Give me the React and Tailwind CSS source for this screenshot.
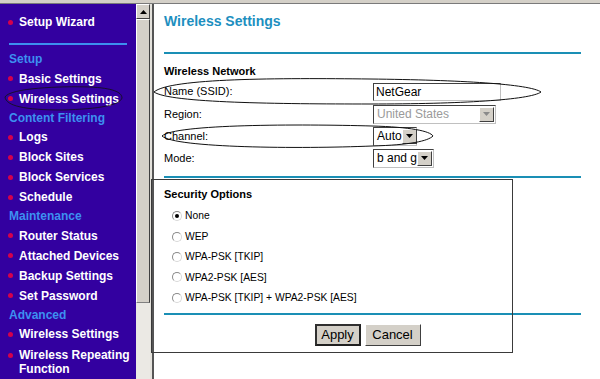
import React from "react";

const navItems = [
  { type: "head", label: "Setup" },
  { type: "item", label: "Basic Settings" },
  { type: "item", label: "Wireless Settings" },
  { type: "head", label: "Content Filtering" },
  { type: "item", label: "Logs" },
  { type: "item", label: "Block Sites" },
  { type: "item", label: "Block Services" },
  { type: "item", label: "Schedule" },
  { type: "head", label: "Maintenance" },
  { type: "item", label: "Router Status" },
  { type: "item", label: "Attached Devices" },
  { type: "item", label: "Backup Settings" },
  { type: "item", label: "Set Password" },
  { type: "head", label: "Advanced" },
  { type: "item", label: "Wireless Settings" },
];

const securityOptions = [
  "None",
  "WEP",
  "WPA-PSK [TKIP]",
  "WPA2-PSK [AES]",
  "WPA-PSK [TKIP] + WPA2-PSK [AES]",
];

const Bullet = () => (
  <div className="w-[5px] h-[5px] rounded-full bg-[#d4004c] shrink-0" />
);

const ArrowBtn = ({ disabled }) => (
  <span className="w-[15px] h-[15px] bg-[#d4d0c8] border border-t-white border-l-white border-r-[#404040] border-b-[#404040] flex items-center justify-center shrink-0">
    <svg width="7" height="4" viewBox="0 0 7 4">
      <path d="M0 0h7L3.5 4z" fill={disabled ? "#8a8a8a" : "#000"} />
    </svg>
  </span>
);

const Select = ({ value, width, disabled }) => (
  <div
    className={`h-[19px] flex items-center justify-between bg-white border border-t-[#404040] border-l-[#404040] border-r-[#c0c0c0] border-b-[#c0c0c0] pl-[3px] pr-[1px] text-[12px] whitespace-nowrap ${
      disabled ? "text-[#9a9a9a]" : "text-black"
    }`}
    style={{ width }}
  >
    <span className="leading-none">{value}</span>
    <ArrowBtn disabled={disabled} />
  </div>
);

const Radio = ({ checked }) => (
  <span className="w-[10px] h-[10px] rounded-full border border-[#8a8a8a] border-b-[#d8d8d8] border-r-[#d8d8d8] bg-white flex items-center justify-center shrink-0">
    {checked && <span className="w-[4px] h-[4px] rounded-full bg-black" />}
  </span>
);

const Row = ({ label, children, first }) => (
  <div className={`flex items-center ${first ? "h-[23px] mt-[1px]" : "h-[22px]"}`}>
    <span className="w-[209px] text-[11px] text-black">{label}</span>
    {children}
  </div>
);

export default function App() {
  return (
    <div
      className="relative w-[600px] h-[379px] overflow-hidden bg-white flex flex-col"
      style={{ fontFamily: '"Liberation Sans", Arial, sans-serif' }}
    >
      <div className="h-[4px] shrink-0 bg-[#d4d0c8] border-b border-[#7a7a7a]" />
      <div className="flex flex-1 min-h-0">
        {/* left nav */}
        <div className="w-[136px] bg-[#3300a0] shrink-0 flex flex-col pt-[8px]">
          <div className="h-[20px] flex items-center gap-[6px] pl-[8px]">
            <Bullet />
            <span className="text-white font-bold text-[12px]">Setup Wizard</span>
          </div>
          <div className="h-[2px] bg-[#3d8ef0] mx-[9px] mt-[11px] mb-[5px]" />
          {navItems.map((it, i) =>
            it.type === "head" ? (
              <div key={i} className="h-[18.6px] flex items-center pl-[9px] text-[12px] font-bold text-[#3d90f0]">
                {it.label}
              </div>
            ) : (
              <div key={i} className="h-[20px] flex items-center gap-[6px] pl-[8px]">
                <Bullet />
                <span className="text-white font-bold text-[12px]">{it.label}</span>
              </div>
            )
          )}
          <div className="flex gap-[6px] pl-[8px] pt-[4px]">
            <div className="pt-[5px]">
              <Bullet />
            </div>
            <span className="text-white font-bold text-[12px] leading-[14px]">
              Wireless Repeating
              <br />
              Function
            </span>
          </div>
        </div>

        {/* scrollbar */}
        <div className="w-[14px] shrink-0 flex flex-col bg-[#ebe9e4]">
          <div className="h-[15px] bg-[#d4d0c8] border border-t-white border-l-white border-r-[#404040] border-b-[#404040] flex items-center justify-center">
            <svg width="7" height="4" viewBox="0 0 7 4">
              <path d="M3.5 0L7 4H0z" fill="#000" />
            </svg>
          </div>
          <div className="h-[284px] bg-[#d4d0c8] border border-t-white border-l-white border-r-[#404040] border-b-[#808080]" />
        </div>
        <div className="w-[2px] shrink-0 bg-[#e4e2dc]" />

        {/* content */}
        <div className="flex-1 border-l-2 border-[#555] pl-[10px] pr-[19px] flex flex-col">
          <div className="h-[18px] mt-[8px] flex items-center text-[14px] font-bold text-[#1d8fbf]">
            Wireless Settings
          </div>
          <div className="h-[2px] bg-[#1a8fb5] mt-[22px]" />
          <div className="h-[15px] mt-[10px] flex items-center text-[11px] font-bold text-black">
            Wireless Network
          </div>
          <Row label="Name (SSID):" first>
            <div className="w-[128px] h-[18px] bg-white border border-t-[#404040] border-l-[#404040] border-r-[#c0c0c0] border-b-[#c0c0c0] pl-[2px] text-[12px] flex items-center">
              NetGear
            </div>
          </Row>
          <Row label="Region:">
            <Select value="United States" width={123} disabled />
          </Row>
          <Row label="Channel:">
            <Select value="Auto" width={44} />
          </Row>
          <Row label="Mode:">
            <Select value="b and g" width={61} />
          </Row>
          <div className="h-[2px] bg-[#1a8fb5] mt-[7px]" />
          <div className="h-[15px] mt-[9px] flex items-center text-[11px] font-bold text-black">
            Security Options
          </div>
          <div className="flex flex-col mt-[4px] pl-[8px]">
            {securityOptions.map((o, i) => (
              <div key={i} className="h-[20.4px] flex items-center gap-[3px] text-[10.3px] text-black">
                <Radio checked={i === 0} />
                <span>{o}</span>
              </div>
            ))}
          </div>
          <div className="h-[2px] bg-[#1a8fb5] mt-[5px]" />
          <div className="flex justify-center gap-[4px] mt-[9px] pr-[10px]">
            <button className="w-[46px] h-[22px] bg-[#d4d0c8] border-2 border-t-[#303030] border-l-[#303030] border-r-[#202020] border-b-[#202020] text-[13px] text-black leading-none">
              Apply
            </button>
            <button className="w-[56px] h-[22px] bg-[#d4d0c8] border border-t-white border-l-white border-r-[#404040] border-b-[#404040] text-[13px] text-black leading-none">
              Cancel
            </button>
          </div>
        </div>
      </div>

      {/* annotation overlays */}
      <div className="absolute left-[151px] top-[179px] w-[362px] h-[174px] border border-[#3a3a3a] pointer-events-none" />
      <svg className="absolute inset-0 pointer-events-none" width="600" height="379" viewBox="0 0 600 379">
        <g fill="none" stroke="#111" strokeWidth="1">
          <path d="M154 92 C 170 78, 280 78, 370 79 C 460 80, 530 84, 541 92 C 530 100, 460 104, 370 104 C 280 104, 170 103, 154 92 Z" />
          <path d="M162 136 C 175 124, 300 124, 372 126 C 410 127, 430 131, 433 136 C 428 141, 410 145, 372 146 C 300 149, 175 148, 162 136 Z" />
          <path d="M5 97 C 10 88, 60 86, 90 87 C 112 88, 122 92, 122 98 C 120 105, 100 109, 62 110 C 25 110, 6 106, 5 97 Z" strokeWidth="0.8" />
        </g>
      </svg>
    </div>
  );
}
